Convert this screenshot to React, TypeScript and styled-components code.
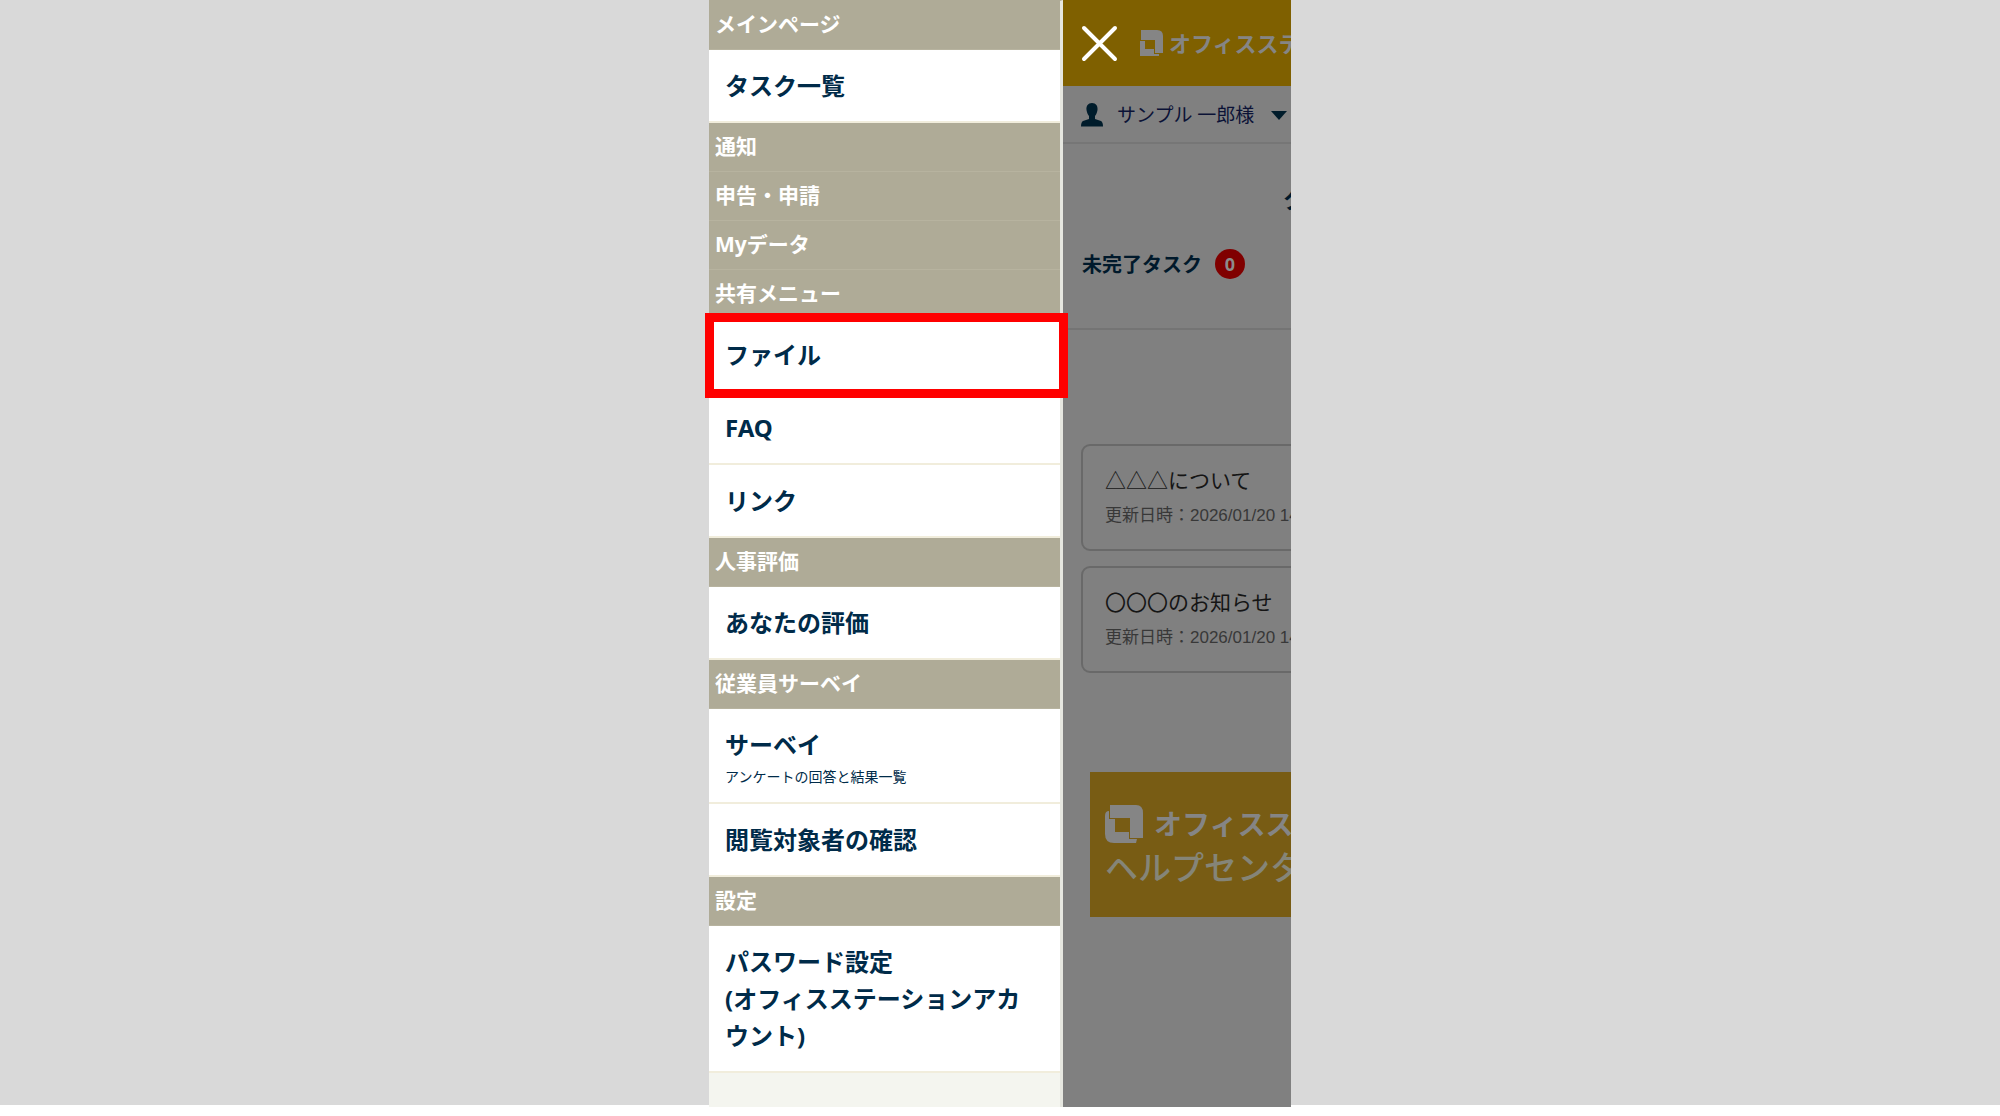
import React from "react";
import styled, { createGlobalStyle } from "styled-components";

const Global = createGlobalStyle`
  * { box-sizing: border-box; }
  body { margin: 0; background: #fff; }
  #root { height: 100vh; }
`;

const Stage = styled.div`
  display: flex;
  justify-content: center;
  height: 100%;
  padding-bottom: 9px;
  background: linear-gradient(#d9d9d9, #d9d9d9) no-repeat 0 0 / 100% calc(100% - 11px) #fff;
  font-family: "Noto Sans", "Noto Sans CJK JP", sans-serif;
`;

const Phone = styled.div`
  display: flex;
  width: 582px;
  height: 100%;
`;

const Menu = styled.nav`
  flex: 0 0 354px;
  background: #f4f5ef;
  border-top: 1px solid #afab97;
  border-right: 3px solid #e6e7e0;
`;

const Heading = styled.h2`
  margin: 0;
  height: 49px;
  padding: 7px 6px;
  border-bottom: 1px solid #b7b39f;
  background: #afab97;
  color: #fff;
  font-size: 21px;
  line-height: 32px;
  font-weight: 700;
`;

const Item = styled.a`
  position: relative;
  display: block;
  padding: 17px 16px;
  border-bottom: 2px solid #f1eddc;
  background: #fff;
  color: #002b49;
  font-size: 24px;
  line-height: 37px;
  font-weight: 700;
  text-decoration: none;
`;

const Note = styled.small`
  display: block;
  padding-top: 6px;
  font-size: 14px;
  line-height: 16px;
  font-weight: 400;
`;

const Marker = styled.span`
  position: absolute;
  inset: -6px -8px -8px -4px;
  border: 9px solid #f00;
  z-index: 2;
`;

const Page = styled.div`
  flex: 1;
  min-width: 0;
  overflow: hidden;
  background: #808080;
  color: #00192b;
  white-space: nowrap;
`;

const Header = styled.header`
  display: flex;
  align-items: center;
  height: 86px;
  padding-left: 18px;
  background: #7f6000;
`;

const Close = styled.button`
  width: 37px;
  height: 37px;
  margin-right: 22px;
  padding: 0;
  border: 0;
  background: none;
  flex: none;
`;

const Brand = styled.span<{ $size: number }>`
  display: flex;
  align-items: center;
  gap: ${(p) => (p.$size > 24 ? 11 : 5)}px;
  color: #858585;
  font-size: ${(p) => p.$size}px;
  line-height: 44px;
  font-weight: 700;
  svg { flex: none; }
`;

const User = styled.button`
  display: flex;
  align-items: center;
  width: 100%;
  height: 58px;
  padding: 2px 0 0 18px;
  border: 0;
  border-bottom: 2px solid #767676;
  background: none;
  color: #0b1236;
  font: 400 19px/28px "Noto Sans", "Noto Sans CJK JP", sans-serif;
  svg { flex: none; }
  span { margin: 0 17px 0 14px; }
`;

const Title = styled.h1`
  margin: 0;
  padding: 37px 0 0 220px;
  font-size: 24px;
  line-height: 36px;
`;

const Tasks = styled.div`
  display: flex;
  align-items: center;
  gap: 13px;
  height: 113px;
  padding: 0 0 18px 19px;
  border-bottom: 2px solid #747474;
  font-size: 20px;
  font-weight: 700;
`;

const Badge = styled.span`
  width: 30px;
  height: 30px;
  border-radius: 50%;
  background: #800000;
  color: #8c8c8c;
  font-size: 18px;
  line-height: 31px;
  text-align: center;
`;

const News = styled.div`
  display: grid;
  gap: 15px;
  padding: 114px 0 0 18px;
`;

const Card = styled.article`
  height: 107px;
  width: 400px;
  padding: 18px 22px;
  border: 2px solid #696969;
  border-radius: 9px;
`;

const CardTitle = styled.h3`
  margin: 0;
  color: #151515;
  font-size: 21px;
  line-height: 32px;
  font-weight: 400;
`;

const Updated = styled.time`
  display: block;
  padding-top: 8px;
  color: #383838;
  font: 400 17px/24px "Liberation Sans", "Noto Sans CJK JP", sans-serif;
`;

const Help = styled.a`
  display: block;
  width: 400px;
  height: 145px;
  margin: 99px 0 0 27px;
  padding: 30px 15px;
  background: #785c14;
  color: #858578;
  text-decoration: none;
`;

const HelpName = styled.span`
  display: block;
  font-size: 33px;
  line-height: 44px;
  font-weight: 500;
`;

const Logo = ({ size }: { size: number }) => (
  <svg width={size} height={size} viewBox="0 0 38 38" fill="#858585" aria-hidden="true">
    <path d="M5 0H31Q38 0 38 8V33H25V13H5Z" />
    <path d="M0 11Q0 6 4 6V14H10V27H24V34H32L31 38H9Q0 38 0 29Z" />
  </svg>
);

const HeaderLogo = () => (
  <svg width="24" height="27" viewBox="0 0 24 27" fill="#858585" aria-hidden="true">
    <path d="M1 0H17Q23 0 23 6V23H15V10H1Z" />
    <path d="M0 11H5V19H14V24H19V26H0Z" />
  </svg>
);

const groups: { name: string; items: { label: React.ReactNode; note?: string; marked?: boolean }[] }[] = [
  { name: "メインページ", items: [{ label: "タスク一覧" }] },
  { name: "通知", items: [] },
  { name: "申告・申請", items: [] },
  { name: "Myデータ", items: [] },
  { name: "共有メニュー", items: [{ label: "ファイル", marked: true }, { label: "FAQ" }, { label: "リンク" }] },
  { name: "人事評価", items: [{ label: "あなたの評価" }] },
  { name: "従業員サーベイ", items: [{ label: "サーベイ", note: "アンケートの回答と結果一覧" }, { label: "閲覧対象者の確認" }] },
  { name: "設定", items: [{ label: <>パスワード設定<br />(オフィスステーションアカウント)</> }] },
];

const news = ["△△△について", "〇〇〇のお知らせ"];

export default function App() {
  return (
    <Stage>
      <Global />
      <Phone>
        <Menu>
          {groups.map((g) => (
            <React.Fragment key={g.name}>
              <Heading>{g.name}</Heading>
              {g.items.map((it, i) => (
                <Item href="#" key={i}>
                  {it.label}
                  {it.note && <Note>{it.note}</Note>}
                  {it.marked && <Marker />}
                </Item>
              ))}
            </React.Fragment>
          ))}
        </Menu>
        <Page>
          <Header>
            <Close aria-label="閉じる">
              <svg width="37" height="37" viewBox="0 0 37 37" stroke="#fff" strokeWidth="4" strokeLinecap="round">
                <path d="M3 3L34 34M34 3L3 34" />
              </svg>
            </Close>
            <Brand $size={22}><HeaderLogo />オフィスステーション</Brand>
          </Header>
          <User>
            <svg width="22" height="24" viewBox="0 0 22 24" fill="#001c2b">
              <path d="M11 0C15 0 17 3 16.500 7C16 10 15 12 14 13V16L20 18Q22 19 22 23.500H0Q0 19 2 18L8 16V13C7 12 6 10 5.500 7C5 3 7 0 11 0Z" />
            </svg>
            <span>サンプル 一郎様</span>
            <svg width="16" height="9" viewBox="0 0 16 9" fill="#001c2b"><path d="M0 0H16L8 9Z" /></svg>
          </User>
          <Title>タスク一覧</Title>
          <Tasks>未完了タスク<Badge>0</Badge></Tasks>
          <News>
            {news.map((n) => (
              <Card key={n}>
                <CardTitle>{n}</CardTitle>
                <Updated>更新日時：2026/01/20 14:00</Updated>
              </Card>
            ))}
          </News>
          <Help href="#">
            <Brand $size={28}><Logo size={38} />オフィスステーション</Brand>
            <HelpName>ヘルプセンター</HelpName>
          </Help>
        </Page>
      </Phone>
    </Stage>
  );
}
